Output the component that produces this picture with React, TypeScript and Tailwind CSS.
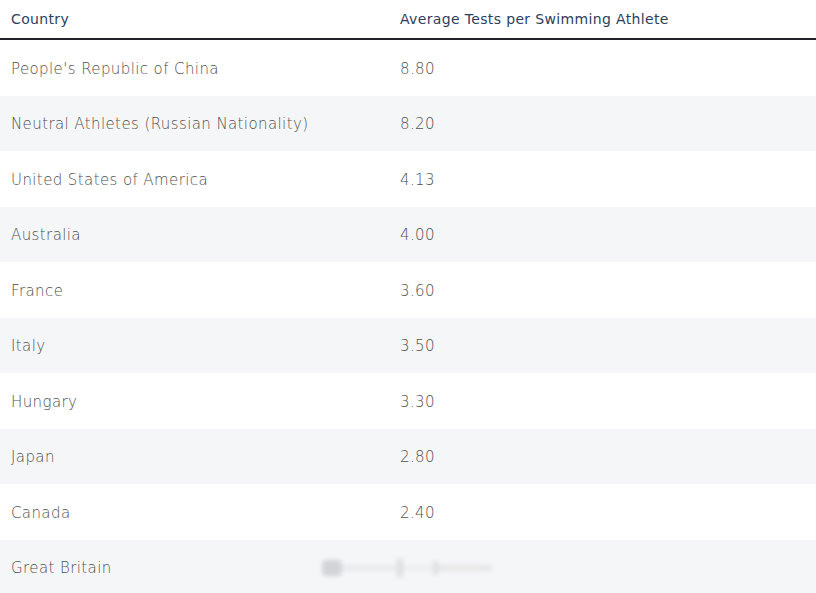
const rows: [string, string][] = [
  ["People's Republic of China", '8.80'],
  ['Neutral Athletes (Russian Nationality)', '8.20'],
  ['United States of America', '4.13'],
  ['Australia', '4.00'],
  ['France', '3.60'],
  ['Italy', '3.50'],
  ['Hungary', '3.30'],
  ['Japan', '2.80'],
  ['Canada', '2.40'],
  ['Great Britain', ''],
];

// faint smudge where the value is hidden behind a watermark
function Smudge() {
  return (
    <div className="-ml-[78px] flex h-[22px] w-[170px] items-center blur-[2px]">
      <div className="h-[16px] w-[20px] rounded bg-[#d4d4d8]" />
      <div className="h-[4px] w-[55px] bg-[#e6e6e8]" />
      <div className="h-[18px] w-[6px] bg-[#dedee0]" />
      <div className="h-[4px] w-[30px] bg-[#ececee]" />
      <div className="h-[14px] w-[5px] bg-[#e0e0e2]" />
      <div className="h-[6px] w-[54px] bg-[#e6e6e8]" />
    </div>
  );
}

export default function App() {
  return (
    <div className="w-[816px] h-[593px] overflow-hidden bg-white font-['DejaVu_Sans','Liberation_Sans',sans-serif]">
      <div className="grid grid-cols-[389px_1fr] h-[40px] items-center border-b-2 border-[#222326] text-[14px] tracking-[0.35px] text-[#2b3f5e]">
        <div className="pl-[11px]">Country</div>
        <div className="pl-[11px]">Average Tests per Swimming Athlete</div>
      </div>
      {rows.map(([country, avg], i) => (
        <div
          key={country}
          className={`grid grid-cols-[389px_1fr] h-[55.5px] items-center pt-[2px] text-[15px] font-extralight tracking-[0.4px] text-[#505050] ${i % 2 === 1 ? 'bg-[#f5f6f8]' : 'bg-white'}`}
        >
          <div className="pl-[11px]">{country}</div>
          <div className="pl-[11px]">{avg || <Smudge />}</div>
        </div>
      ))}
    </div>
  );
}
